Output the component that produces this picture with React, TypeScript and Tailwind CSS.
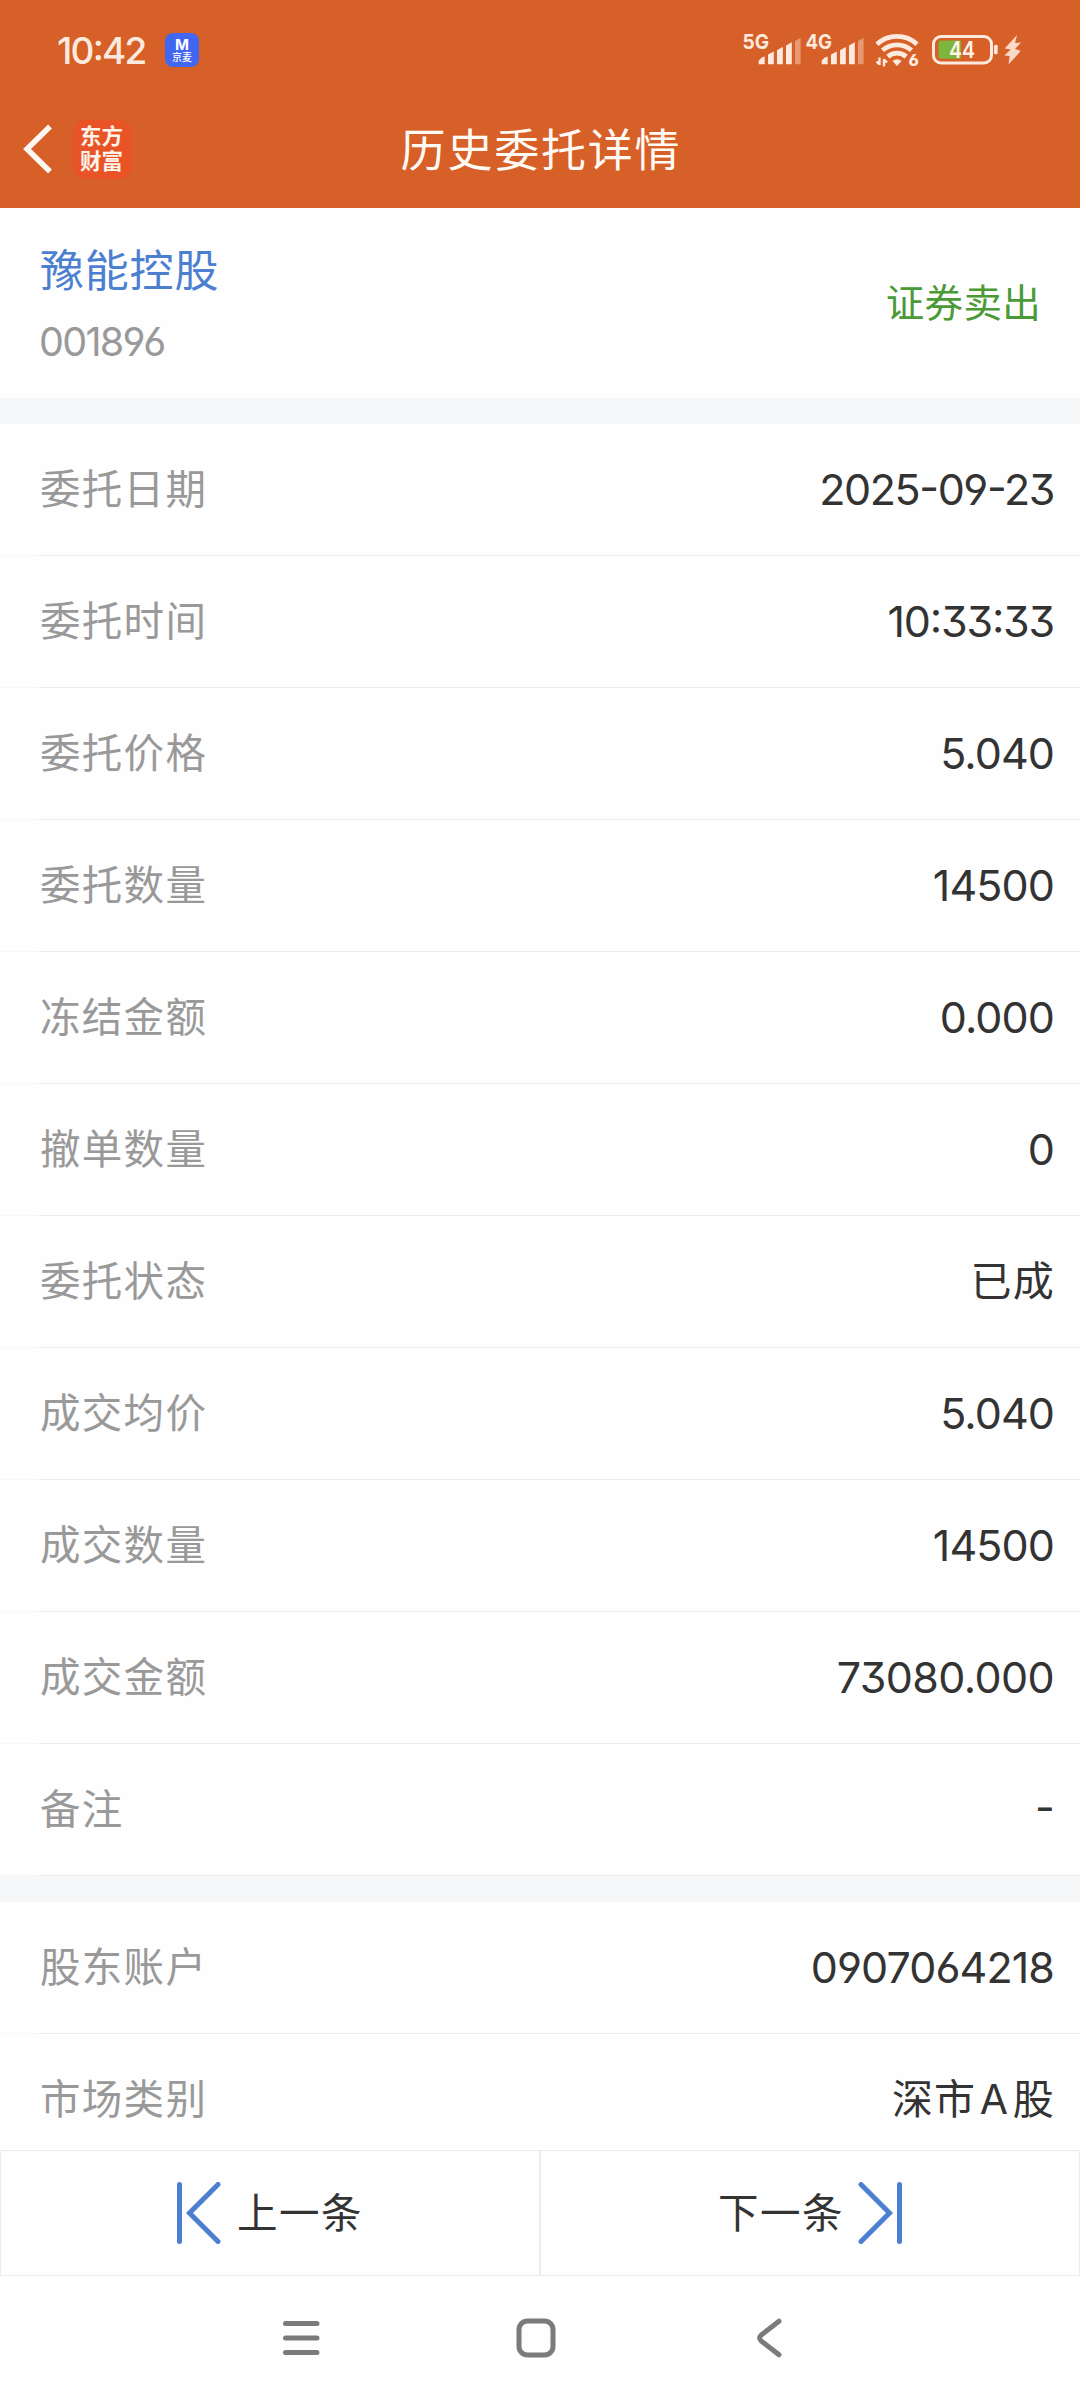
import React from 'react';

type Detail = {
  label: string;
  value: string;
  // tracking differs between digits and Chinese text
  kind?: 'date' | 'time' | 'text' | 'amount';
};

const ORDER_DETAILS: Detail[] = [
  { label: '委托日期', value: '2025-09-23', kind: 'date' },
  { label: '委托时间', value: '10:33:33', kind: 'time' },
  { label: '委托价格', value: '5.040' },
  { label: '委托数量', value: '14500' },
  { label: '冻结金额', value: '0.000' },
  { label: '撤单数量', value: '0' },
  { label: '委托状态', value: '已成', kind: 'text' },
  { label: '成交均价', value: '5.040' },
  { label: '成交数量', value: '14500' },
  { label: '成交金额', value: '73080.000', kind: 'amount' },
  { label: '备注', value: '-' },
];

const ACCOUNT_DETAILS: Detail[] = [
  { label: '股东账户', value: '0907064218' },
  { label: '市场类别', value: '深市A股', kind: 'text' },
];

function Signal({ label }: { label: string }) {
  return (
    <svg width="58" height="46" viewBox="0 -6 58 46" fill="#fdeade">
      <text x="-0.5" y="15.7" fontSize="20.5" fontWeight="700" textLength="26.5" lengthAdjust="spacingAndGlyphs">
        {label}
      </text>
      <path d="M15.7 31.3v-3q1-3 5-4.5h1v7.5z" />
      <path d="M25 31.3V21.6l5.8-3.2v12.9z" />
      <path d="M34 31.3V17.2l5.8-3.2v17.3z" />
      <path d="M43 31.3V12.4l5.8-3.2v22.1z" />
      <path d="M52 31.3V8l5.6-3.2v26.5z" opacity="0.42" />
    </svg>
  );
}

function Wifi() {
  return (
    <svg width="46" height="46" viewBox="0 -5 46 46" fill="none" stroke="#fdeade">
      <path d="M2 12.2a29.5 29.5 0 0 1 40 0" strokeWidth="4.8" />
      <path d="M7.5 18.3a22 22 0 0 1 29 0" strokeWidth="4.8" />
      <path d="M12.8 24.6a14 14 0 0 1 18.4 0" strokeWidth="4.8" />
      <path d="M22 34l-4.5-5q4.5-3.5 9 0z" fill="#fdeade" stroke="none" />
      <path d="M4.5 33v-7.5M4.5 32.5l-3-3M9 34.5V27M9 27.5l3 3" strokeWidth="2.4" />
      <text x="33.5" y="34.3" fontSize="16.5" fontWeight="800" fill="#fdeade" stroke="none">6</text>
    </svg>
  );
}

function Battery() {
  return (
    <svg width="67" height="30" viewBox="0 0 67 30">
      <rect x="1.5" y="1.5" width="58" height="26.5" rx="7.5" fill="none" stroke="#fdeade" strokeWidth="3" />
      <path d="M9.5 5.5H29v18.2H9.5a3 3 0 0 1-3-3V8.5a3 3 0 0 1 3-3z" fill="#7db63c" />
      <rect x="62" y="9.8" width="3.7" height="9.5" rx="1.6" fill="#fdeade" />
      <text x="17" y="23.2" fontSize="23.5" fontWeight="600" fill="#fff3ea" textLength="26" lengthAdjust="spacingAndGlyphs">
        44
      </text>
    </svg>
  );
}

function Bolt() {
  return (
    <svg width="18" height="30" viewBox="0 0 18 30" fill="#fbd9c8">
      <path d="M13 0L.7 13.5l6 1-6.4 6 5.4.5-1.2 8.5L16.700 16 11 14l6-6.500-6 .5z" />
    </svg>
  );
}

function StatusBar() {
  return (
    <div className="flex h-[90px] items-center justify-between pt-[10px] pl-[57px] pr-[58px] text-[#fdeade]">
      <span className="text-[37px] leading-none font-medium tracking-[-1.8px]">10:42</span>
      <div className="flex items-center">
        <div className="flex gap-[5px] pr-[11px]">
          <Signal label="5G" />
          <Signal label="4G" />
        </div>
        <Wifi />
        <div className="pl-[11px] pr-[5px]"><Battery /></div>
        <Bolt />
      </div>
    </div>
  );
}

function JingmaiBadge() {
  return (
    <div className="absolute left-[165px] top-[33px] flex h-[34px] w-[34px] flex-col items-center rounded-[8px] bg-[#4167f0] pt-[5px] text-white">
      <span className="text-[15px] leading-[13px] font-bold">M</span>
      <span className="mt-px text-[10px] leading-[11px] font-medium">京麦</span>
    </div>
  );
}

function TitleBar() {
  return (
    <div className="relative flex h-[118px] items-center pl-[22px]">
      <svg width="32" height="50" viewBox="0 0 32 50" fill="none" stroke="#fff8f2" strokeWidth="5.5">
        <path d="M28 2.5L5 25l23 22.5" />
      </svg>
      <div className="ml-[19px] flex h-[59px] w-[59px] flex-col items-center justify-center rounded-[13px] bg-[#e95427] pr-[2px] text-[21.5px] leading-[25px] font-bold text-[#fff3ea]">
        <span>东方</span>
        <span>财富</span>
      </div>
      <h1 className="absolute inset-x-0 pt-[3px] pl-[2px] text-center text-[45px] leading-[60px] tracking-[1.8px] text-[#fffaf4]">
        历史委托详情
      </h1>
    </div>
  );
}

function valueClass(kind?: Detail['kind']) {
  switch (kind) {
    case 'date': return 'text-[43px] tracking-[-1.4px] pr-[26px]';
    case 'time': return 'text-[43px] tracking-[-1.2px] pr-[26px]';
    case 'text': return 'text-[41px] tracking-[1.2px] pr-[25px]';
    case 'amount': return 'text-[43px] tracking-[-0.6px] pr-[26px]';
    default: return 'text-[43px] tracking-[-0.9px] pr-[26px]';
  }
}

// A Latin letter inside Chinese text gets a little air on both sides
function DetailValue({ value }: { value: string }) {
  return value.split(/([A-Z])/).map((part, i) =>
    /^[A-Z]$/.test(part) ? <span key={i} className="mx-[3.5px]">{part}</span> : part
  );
}

function DetailRow({ label, value, kind }: Detail) {
  return (
    <div className="flex h-[132px] shrink-0">
      <div className="w-[39px] border-b border-[#f8f8f8]" />
      <div className="flex flex-1 items-center justify-between border-b border-[#ebebeb]">
        <span className="pt-[2px] pl-px text-[40.5px] tracking-[1.3px] text-[#999999]">{label}</span>
        <span className={`text-[#333333] ${valueClass(kind)}`}>
          <DetailValue value={value} />
        </span>
      </div>
    </div>
  );
}

function SkipIcon({ next }: { next?: boolean }) {
  return (
    <svg
      width="44"
      height="62"
      viewBox="0 0 44 62"
      fill="none"
      stroke="#4d7fd1"
      strokeWidth="5"
      strokeLinecap="round"
      className={next ? 'rotate-180' : ''}
    >
      <path d="M2.5 2.5v57M41 2.5L12.5 31 41 59.5" />
    </svg>
  );
}

function Pager() {
  return (
    <div className="flex h-[126px] shrink-0 text-[40.5px] tracking-[1.5px] text-[#333333]">
      <button className="flex w-[540px] items-center border border-[#ebebeb] pl-[176px]">
        <SkipIcon />
        <span className="ml-[16px] pt-[2px]">上一条</span>
      </button>
      <button className="flex w-[540px] items-center border border-[#ebebeb] pl-[177px]">
        <span className="pt-[2px]">下一条</span>
        <span className="ml-[14px]"><SkipIcon next /></span>
      </button>
    </div>
  );
}

function SystemNav() {
  return (
    <div className="flex h-[124px] shrink-0 items-center pl-[283px]">
      <svg width="37" height="40" viewBox="0 0 37 40" stroke="#7b7b7b" strokeWidth="5" strokeLinecap="round">
        <path d="M2.5 5.5H34M2.5 20H34M2.5 34.5H34" />
      </svg>
      <svg className="ml-[196px]" width="40" height="40" viewBox="0 0 40 40" fill="none" stroke="#7b7b7b" strokeWidth="5">
        <rect x="3" y="3" width="34" height="34" rx="8.5" />
      </svg>
      <svg className="ml-[201px]" width="26" height="40" viewBox="0 0 26 40" fill="none" stroke="#7b7b7b" strokeWidth="5" strokeLinecap="round" strokeLinejoin="round">
        <path d="M22 3.2L4.2 17q-3.2 3 0 6L22 36.8" />
      </svg>
    </div>
  );
}

export default function App() {
  return (
    <div className="flex h-[2400px] w-[1080px] flex-col overflow-hidden bg-[#fefefe] font-['Inter','Noto_Sans_CJK_SC',sans-serif] [font-feature-settings:'case','cv03','cv04','cv09']">
      <header className="relative h-[208px] shrink-0 bg-[#d75f28]">
        <StatusBar />
        <JingmaiBadge />
        <TitleBar />
      </header>

      {/* Stock and trade direction */}
      <section className="flex h-[190px] shrink-0 items-center justify-between pl-[39px] pr-[39px]">
        <div className="pt-[6px]">
          <div className="pl-px text-[44px] leading-[72px] tracking-[0.8px] text-[#4d7fd1]">豫能控股</div>
          <div className="text-[39.5px] leading-[71px] tracking-[-1.7px] text-[#999999]">001896</div>
        </div>
        <span className="pt-[2px] text-[38.5px] tracking-[0.3px] text-[#4a9a35]">证券卖出</span>
      </section>

      <div className="h-[26px] shrink-0 bg-[#f6f7f9]" />

      <section className="shrink-0">
        {ORDER_DETAILS.map(item => (
          <DetailRow key={item.label} {...item} />
        ))}
      </section>

      <div className="h-[26px] shrink-0 bg-[#f6f7f9]" />

      {/* Last row runs under the pager */}
      <section className="h-[248px] shrink-0 overflow-hidden">
        {ACCOUNT_DETAILS.map(item => (
          <DetailRow key={item.label} {...item} />
        ))}
      </section>

      <Pager />
      <SystemNav />
    </div>
  );
}
